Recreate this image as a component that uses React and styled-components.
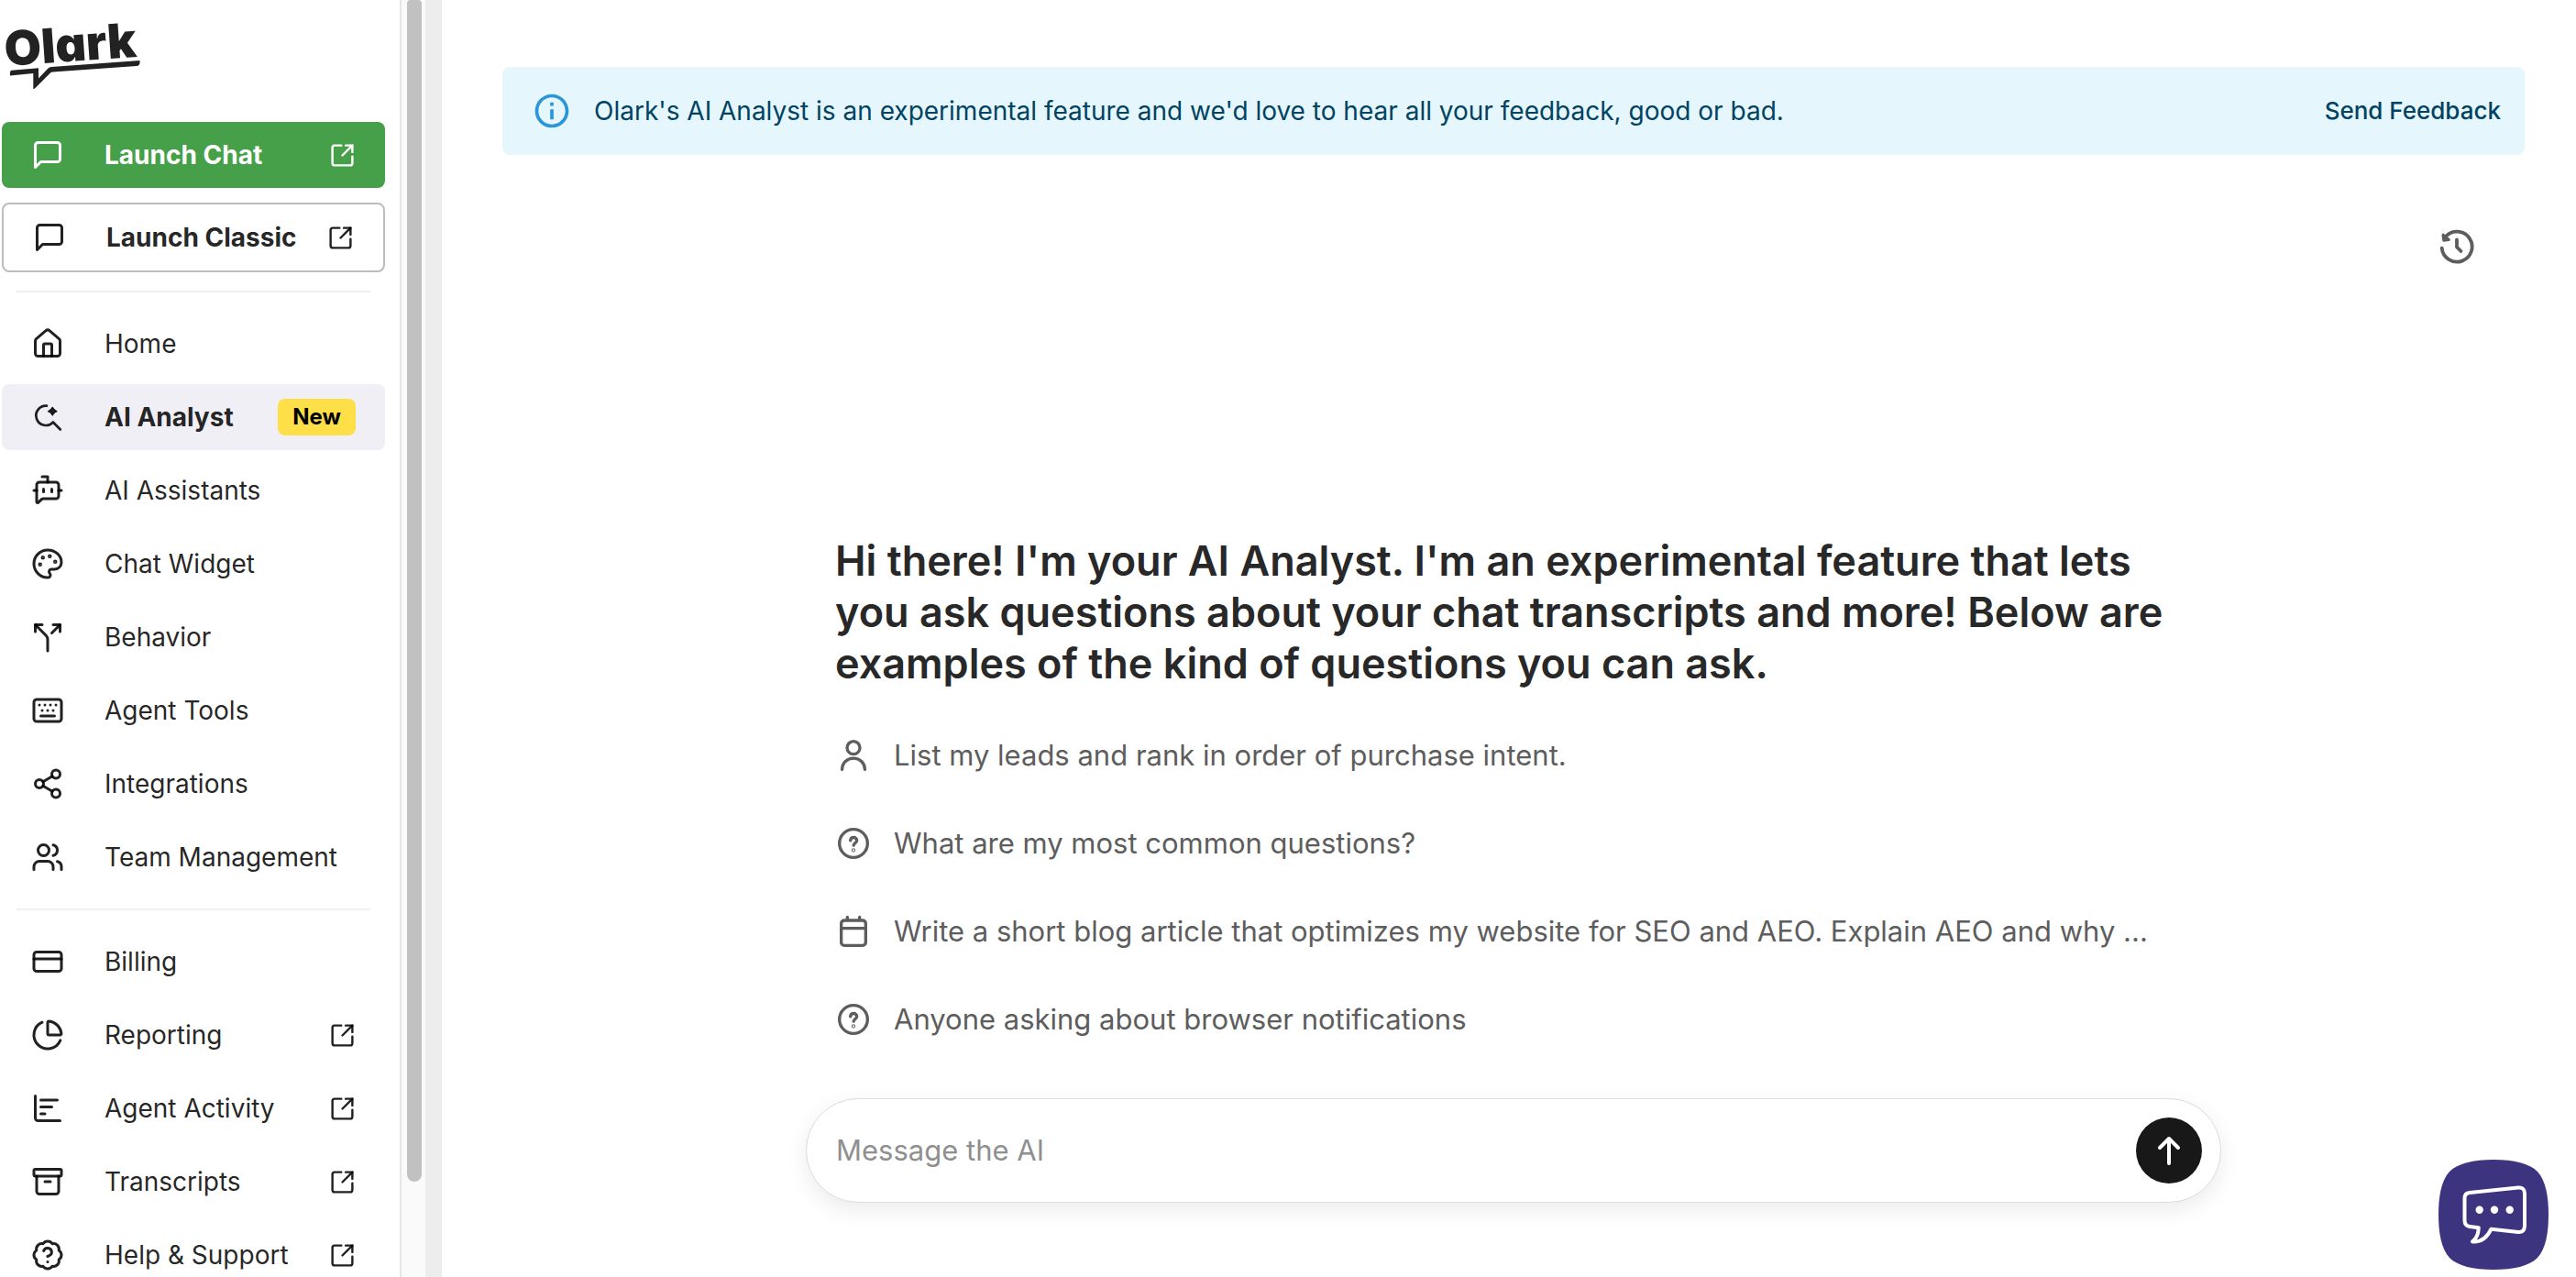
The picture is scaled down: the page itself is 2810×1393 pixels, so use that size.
import React from "react";
import styled, { createGlobalStyle, css } from "styled-components";
import {
  House,
  BotMessageSquare,
  Palette,
  Split,
  Keyboard,
  Share2,
  Users,
  CreditCard,
  ChartPie,
  ChartBarDecreasing,
  Archive,
  BadgeQuestionMark,
  SquareArrowOutUpRight,
} from "lucide-react";

const GlobalStyle = createGlobalStyle`
  * { box-sizing: border-box; }
  body {
    margin: 0;
    background: #fff;
    color: #212121;
    font-family: Inter, Roboto, "Liberation Sans", sans-serif;
  }
  button, input { font-family: inherit; }
`;

const Page = styled.div`
  display: flex;
  height: 100vh;
  overflow: hidden;
`;

const Sidebar = styled.aside`
  display: flex;
  flex: none;
  width: 482px;
  border-right: 18px solid #ededed;
`;

const SidebarContent = styled.div`
  display: flex;
  flex-direction: column;
  flex: 1;
  gap: 16px;
  padding: 0 16px 0 2px;
  overflow: hidden;
  border-right: 2px solid #e6e6e6;
`;

const ScrollTrack = styled.div`
  flex: none;
  width: 26px;
  padding: 0 4px 0 6px;
  background: #fafafa;
`;

const ScrollThumb = styled.div`
  width: 16px;
  height: 92.5%;
  background: #c1c1c1;
  border-radius: 4px 4px 8px 8px;
`;

const LogoLink = styled.a`
  display: block;
  flex: none;
  height: 117px;
  color: #222;
`;

const LogoText = styled.text`
  font-family: Inter, Lato, sans-serif;
  font-size: 52px;
  font-weight: 900;
  font-feature-settings: "cv11";
`;

const NavList = styled.nav`
  display: flex;
  flex-direction: column;
  flex: none;
  gap: 8px;
`;

const Divider = styled.hr`
  flex: none;
  align-self: stretch;
  height: 2px;
  margin: 4px 16px;
  border: 0;
  background: #efefef;
`;

const variants = {
  primary: css`
    background: #45a049;
    color: #fff;
    font-weight: 700;
  `,
  outline: css`
    height: 76px;
    border: 2px solid #bdbdbd;
    font-weight: 700;
  `,
  active: css`
    background: #f0eff6;
    font-weight: 700;
  `,
};

const NavLink = styled.a`
  display: flex;
  align-items: center;
  flex: none;
  height: 72px;
  padding: 0 32px;
  border-radius: 8px;
  color: rgba(0, 0, 0, 0.87);
  font-size: 28px;
  line-height: 40px;
  text-decoration: none;
  white-space: nowrap;
  ${(p) => variants[p.$variant]}

  svg { flex: none; }
`;

const NavLabel = styled.span`
  flex: 1;
  margin-left: 44px;
`;

const Badge = styled.span`
  padding: 0 16px;
  border-radius: 8px;
  background: #fedf47;
  color: #000;
  font-size: 24px;
  line-height: 40px;
`;

const Main = styled.main`
  display: flex;
  flex-direction: column;
  flex: 1;
  min-width: 0;
  padding: 73px 56px 81px 66px;
`;

const Banner = styled.div`
  display: flex;
  align-items: center;
  flex: none;
  height: 96px;
  padding: 0 26px 0 32px;
  border-radius: 8px;
  background: #e5f6fd;
  color: #014361;
`;

const BannerText = styled.p`
  flex: 1;
  margin: 0 0 0 24px;
  font-size: 28px;
  line-height: 40px;
`;

const FeedbackButton = styled.button`
  padding: 0;
  border: 0;
  background: none;
  color: inherit;
  font-size: 26px;
  font-weight: 500;
  line-height: 40px;
`;

const Toolbar = styled.div`
  display: flex;
  justify-content: flex-end;
  padding: 76px 50px 0 0;
`;

const IconButton = styled.button`
  display: flex;
  padding: 0;
  border: 0;
  background: none;
  color: #5d5d5d;
`;

const Conversation = styled.section`
  width: 100%;
  max-width: 1544px;
  margin: auto auto 0;
`;

const Greeting = styled.h1`
  margin: 0 32px 24px;
  color: #282828;
  font-size: 45px;
  font-weight: 600;
  line-height: 56px;
`;

const Suggestions = styled.ul`
  margin: 0 32px 38px;
  padding: 0;
  list-style: none;
`;

const Suggestion = styled.button`
  display: flex;
  align-items: center;
  gap: 24px;
  width: 100%;
  height: 96px;
  padding: 0;
  border: 0;
  background: none;
  color: #5d5d5d;
  font-size: 31px;
  line-height: 48px;
  text-align: left;
  white-space: nowrap;
`;

const Composer = styled.form`
  display: flex;
  align-items: center;
  height: 114px;
  padding: 0 20px 0 32px;
  border: 1px solid #dcdcdc;
  border-radius: 57px;
  background: #fff;
  box-shadow: 0 8px 24px rgba(0, 0, 0, 0.08);
`;

const MessageInput = styled.input`
  flex: 1;
  min-width: 0;
  padding: 0;
  border: 0;
  outline: 0;
  background: none;
  color: #282828;
  font-size: 31px;
  line-height: 48px;

  &::placeholder { color: #8f8f8f; opacity: 1; }
`;

const SendButton = styled.button`
  display: flex;
  align-items: center;
  justify-content: center;
  flex: none;
  width: 72px;
  height: 72px;
  padding: 0;
  border: 0;
  border-radius: 50%;
  background: #181818;
  color: #fff;
`;

const ChatLauncher = styled.button`
  position: fixed;
  right: 30px;
  bottom: 8px;
  display: flex;
  padding: 0;
  border: 0;
  background: none;
`;

function Logo() {
  return (
    <svg width="180" height="117" viewBox="0 0 180 117" role="img" aria-label="Olark">
      <LogoText x="4" y="72" transform="rotate(-4 4 72)" fill="currentColor">Olark</LogoText>
      <path
        fill="currentColor"
        d="M10.500 76.700L40 74.200V85.500L50.500 74.500Q52 73.200 54 73L150.500 66Q151 69.500 149.500 71Q149 71.800 147 72L55.500 78.400Q54 78.500 53 79.500L37 95.500Q35.500 97 34.300 97V80L9 82.500Q8.500 77 10.500 76.700Z"
      />
    </svg>
  );
}

function LineIcon({ size = 36, strokeWidth = 2, children }) {
  return (
    <svg
      width={size}
      height={size}
      viewBox="0 0 24 24"
      fill="none"
      stroke="currentColor"
      strokeWidth={strokeWidth}
      strokeLinecap="round"
      strokeLinejoin="round"
      aria-hidden="true"
    >
      {children}
    </svg>
  );
}

const MessageIcon = () => (
  <LineIcon>
    <path d="M21 15a2 2 0 0 1-2 2H7l-4 4V5a2 2 0 0 1 2-2h14a2 2 0 0 1 2 2z" />
  </LineIcon>
);

const AnalystIcon = () => (
  <LineIcon strokeWidth={1.8}>
    <path d="M11.300 3.800A7.100 7.100 0 1 0 15.900 15.700L21.200 21" />
    <path
      d="M15.500 4.900Q16.400 7 18.700 7.800Q16.400 8.600 15.500 10.700Q14.600 8.600 12.300 7.800Q14.600 7 15.500 4.900Z"
      fill="currentColor"
      strokeWidth="0.800"
    />
  </LineIcon>
);

const InfoIcon = () => (
  <svg width="44" height="44" viewBox="0 0 24 24" fill="#2b95da" aria-hidden="true">
    <path d="M11 7h2v2h-2zM11 11h2v6h-2zM12 2C6.480 2 2 6.480 2 12s4.480 10 10 10 10-4.480 10-10S17.520 2 12 2zm0 18c-4.410 0-8-3.590-8-8s3.590-8 8-8 8 3.590 8 8-3.590 8-8 8z" />
  </svg>
);

const HistoryIcon = () => (
  <svg width="48" height="48" viewBox="0 0 48 48" fill="none" stroke="currentColor" strokeWidth="3.800" strokeLinecap="round" strokeLinejoin="round" aria-hidden="true">
    <path d="M7.700 25.700A16.500 16.500 0 1 0 11.500 13.500" />
    <path d="M9 11.200L9.700 17.200L15.300 16.400L11.600 13.600Z" fill="currentColor" strokeWidth="3" />
    <path d="M24 16.500V24.500L28.500 29" />
  </svg>
);

const PersonIcon = () => (
  <LineIcon size={40}>
    <circle cx="12" cy="7" r="4.200" />
    <path d="M4.500 21.200C4.700 16.800 7.800 13.900 12 13.900S19.300 16.800 19.500 21.200" />
  </LineIcon>
);

const QuestionIcon = () => (
  <LineIcon size={40}>
    <circle cx="12" cy="12" r="9.200" />
    <path d="M10 10.100C10.100 8.900 10.900 8.100 12.100 8.100C13.300 8.100 14.200 8.900 14.200 10C14.200 11.600 12.200 11.700 12.100 13.300" />
    <circle cx="12" cy="16.400" r="0.300" />
  </LineIcon>
);

const CalendarIcon = () => (
  <LineIcon size={40}>
    <rect x="4" y="4.800" width="16" height="16.400" rx="2" />
    <path d="M4 10H20M8 4.500V2.700M16 4.500V2.700" />
  </LineIcon>
);

const ArrowUpIcon = () => (
  <svg width="40" height="40" viewBox="0 0 40 40" fill="none" stroke="currentColor" strokeWidth="4" strokeLinecap="round" strokeLinejoin="round" aria-hidden="true">
    <path d="M20 34V7M10 17L20 7L30 17" />
  </svg>
);

function LauncherIcon() {
  return (
    <svg width="120" height="120" viewBox="0 0 120 120" aria-hidden="true">
      <path
        fill="#3d3480"
        d="M60 0C82 0 99 4 108 13C117 23 120 40 120 60S117 97 108 107C99 116 82 120 60 120S21 116 12 107C3 97 0 80 0 60S3 23 12 13C21 4 38 0 60 0Z"
      />
      <path
        fill="none"
        stroke="#fff"
        strokeWidth="4"
        strokeLinejoin="round"
        d="M34 36L87 30.500Q94 30 94 37V72Q94 79.500 87 79L57.500 75.700C53.500 84 47 90.500 37 89.500C42 86 43.500 81 43.800 74.200L34 73Q28.500 72.300 28.500 66V42Q28.500 36.500 34 36Z"
      />
      <g fill="#fff">
        <circle cx="44.700" cy="54.800" r="4.200" />
        <circle cx="61" cy="54.800" r="4.200" />
        <circle cx="77.700" cy="54.800" r="4.200" />
      </g>
    </svg>
  );
}

const primaryLinks = [
  { label: "Home", icon: House },
  { label: "AI Analyst", icon: AnalystIcon, variant: "active", badge: "New" },
  { label: "AI Assistants", icon: BotMessageSquare },
  { label: "Chat Widget", icon: Palette },
  { label: "Behavior", icon: Split },
  { label: "Agent Tools", icon: Keyboard },
  { label: "Integrations", icon: Share2 },
  { label: "Team Management", icon: Users },
];

const secondaryLinks = [
  { label: "Billing", icon: CreditCard },
  { label: "Reporting", icon: ChartPie, external: true },
  { label: "Agent Activity", icon: ChartBarDecreasing, external: true },
  { label: "Transcripts", icon: Archive, external: true },
  { label: "Help & Support", icon: BadgeQuestionMark, external: true },
];

const suggestions = [
  { text: "List my leads and rank in order of purchase intent.", icon: PersonIcon },
  { text: "What are my most common questions?", icon: QuestionIcon },
  {
    text: "Write a short blog article that optimizes my website for SEO and AEO. Explain AEO and why ...",
    icon: CalendarIcon,
  },
  { text: "Anyone asking about browser notifications", icon: QuestionIcon },
];

function NavItem({ label, icon: Icon, variant, badge, external }) {
  return (
    <NavLink href="#" $variant={variant} aria-current={variant === "active" ? "page" : undefined}>
      <Icon size={36} />
      <NavLabel>{label}</NavLabel>
      {badge && <Badge>{badge}</Badge>}
      {external && <SquareArrowOutUpRight size={29} />}
    </NavLink>
  );
}

export default function App() {
  return (
    <Page>
      <GlobalStyle />
      <Sidebar>
        <SidebarContent>
          <LogoLink href="#" aria-label="Olark">
            <Logo />
          </LogoLink>
          <NavItem label="Launch Chat" icon={MessageIcon} variant="primary" external />
          <NavItem label="Launch Classic" icon={MessageIcon} variant="outline" external />
          <Divider />
          <NavList aria-label="Main">
            {primaryLinks.map((link) => (
              <NavItem key={link.label} {...link} />
            ))}
          </NavList>
          <Divider />
          <NavList aria-label="Account">
            {secondaryLinks.map((link) => (
              <NavItem key={link.label} {...link} />
            ))}
          </NavList>
        </SidebarContent>
        <ScrollTrack>
          <ScrollThumb />
        </ScrollTrack>
      </Sidebar>

      <Main>
        <Banner role="status">
          <InfoIcon />
          <BannerText>
            Olark's AI Analyst is an experimental feature and we'd love to hear all your feedback, good or bad.
          </BannerText>
          <FeedbackButton type="button">Send Feedback</FeedbackButton>
        </Banner>
        <Toolbar>
          <IconButton type="button" aria-label="History">
            <HistoryIcon />
          </IconButton>
        </Toolbar>
        <Conversation>
          <Greeting>
            Hi there! I'm your AI Analyst. I'm an experimental feature that lets you ask questions about your chat
            transcripts and more! Below are examples of the kind of questions you can ask.
          </Greeting>
          <Suggestions>
            {suggestions.map(({ text, icon: Icon }) => (
              <li key={text}>
                <Suggestion type="button">
                  <Icon />
                  {text}
                </Suggestion>
              </li>
            ))}
          </Suggestions>
          <Composer onSubmit={(event) => event.preventDefault()}>
            <MessageInput type="text" placeholder="Message the AI" aria-label="Message the AI" />
            <SendButton type="submit" aria-label="Send message">
              <ArrowUpIcon />
            </SendButton>
          </Composer>
        </Conversation>
      </Main>

      <ChatLauncher type="button" aria-label="Open chat">
        <LauncherIcon />
      </ChatLauncher>
    </Page>
  );
}
